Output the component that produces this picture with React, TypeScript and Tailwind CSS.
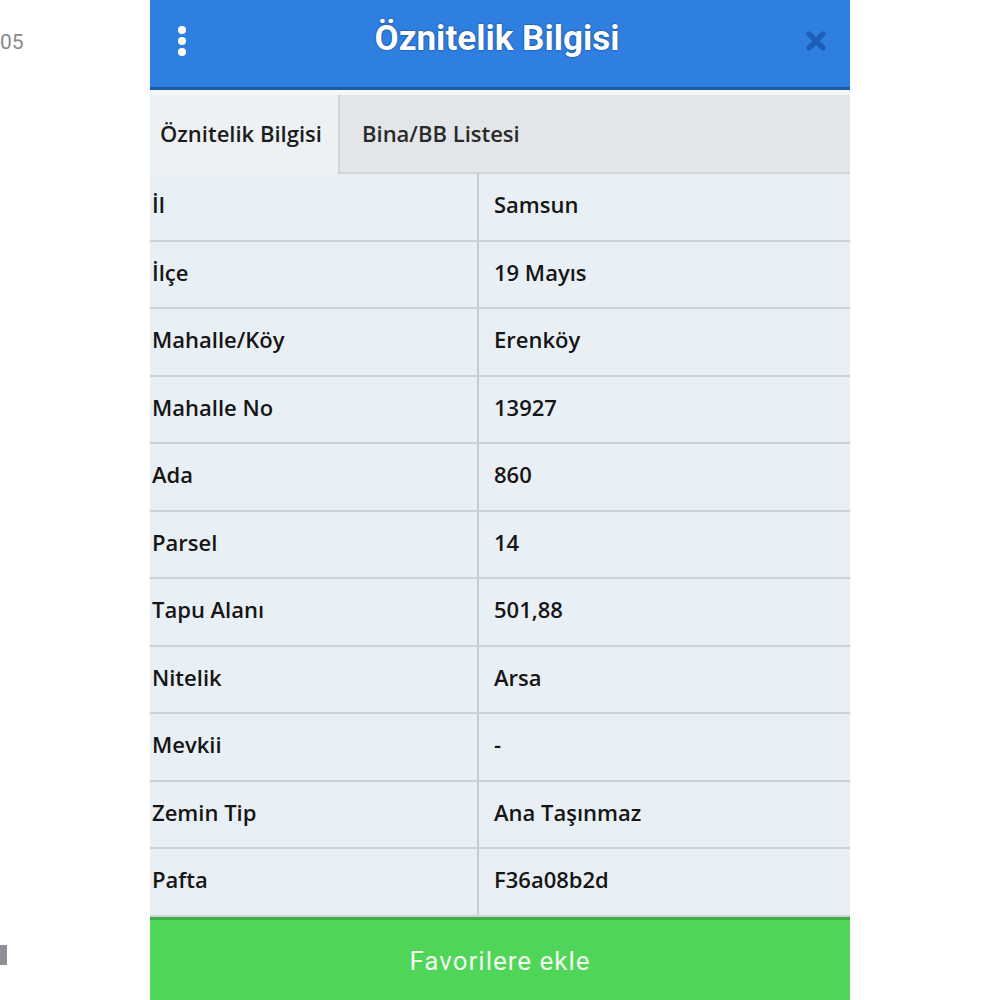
import { X } from "lucide-react";

const rows: [string, string][] = [
  ["İl", "Samsun"],
  ["İlçe", "19 Mayıs"],
  ["Mahalle/Köy", "Erenköy"],
  ["Mahalle No", "13927"],
  ["Ada", "860"],
  ["Parsel", "14"],
  ["Tapu Alanı", "501,88"],
  ["Nitelik", "Arsa"],
  ["Mevkii", "-"],
  ["Zemin Tip", "Ana Taşınmaz"],
  ["Pafta", "F36a08b2d"],
];

export default function App() {
  return (
    <div className="w-[1000px] h-[1000px] bg-white flex overflow-hidden font-['Roboto',sans-serif]">
      <div className="w-[150px] shrink-0 flex flex-col justify-between">
        <div className="pt-[30px] text-[21px] text-[#8a8a8a] leading-none mt-[2px]">05</div>
        <div className="w-[7px] h-[20px] bg-[#8d9196] mb-[35px]" />
      </div>

      <div className="w-[700px] h-[1000px] flex flex-col bg-[#e9f0f5]">
        <div className="h-[90px] shrink-0 bg-[#2f7fe1] border-b-[3px] border-[#1f5aa8] flex items-center pl-[22px] pr-[20px]">
          <div className="w-[20px] flex flex-col items-center gap-[3px] -mt-[6px]">
            <span className="w-[8px] h-[8px] rounded-full bg-white" />
            <span className="w-[8px] h-[8px] rounded-full bg-white" />
            <span className="w-[8px] h-[8px] rounded-full bg-white" />
          </div>
          <div className="flex-1 text-center text-white text-[35px] font-bold -mt-[8px] [text-shadow:0_0_2px_#0b2e66]">
            Öznitelik Bilgisi
          </div>
          <X className="w-[28px] h-[28px] text-[#1d5cb8] -mt-[6px]" strokeWidth={4.5} />
        </div>

        <div className="h-[84px] shrink-0 pt-[5px] bg-[#f4f6f7] flex font-['Open_Sans',sans-serif]">
          <div className="w-[188px] bg-[#edf1f4] flex items-center pl-[10px] pb-[2px] text-[22px] font-semibold text-[#1c1c1c]">
            Öznitelik Bilgisi
          </div>
          <div className="flex-1 bg-[#e3e6e8] border-l-2 border-b-2 border-[#d2d5d8] flex items-center pl-[22px] text-[22px] font-semibold text-[#2a2a2a]">
            Bina/BB Listesi
          </div>
        </div>

        <div className="flex-1 flex flex-col font-['Open_Sans',sans-serif]">
          {rows.map(([k, v]) => (
            <div key={k} className="h-[67.5px] shrink-0 flex border-b-2 border-[#cdd2d6]">
              <div className="w-[329px] border-r-2 border-[#c6cbd0] flex items-center pl-[2px] pb-[4px] text-[22px] font-semibold text-[#161616]">
                {k}
              </div>
              <div className="flex-1 flex items-center pl-[15px] pb-[4px] text-[22px] font-semibold text-[#161616]">
                {v}
              </div>
            </div>
          ))}
        </div>

        <div className="h-[86px] shrink-0 bg-[#4fd557] border-t-[3px] border-[#3fae48] flex items-center justify-center text-[26px] text-[#f2f7ef] tracking-[1px]">
          Favorilere ekle
        </div>
      </div>
    </div>
  );
}
